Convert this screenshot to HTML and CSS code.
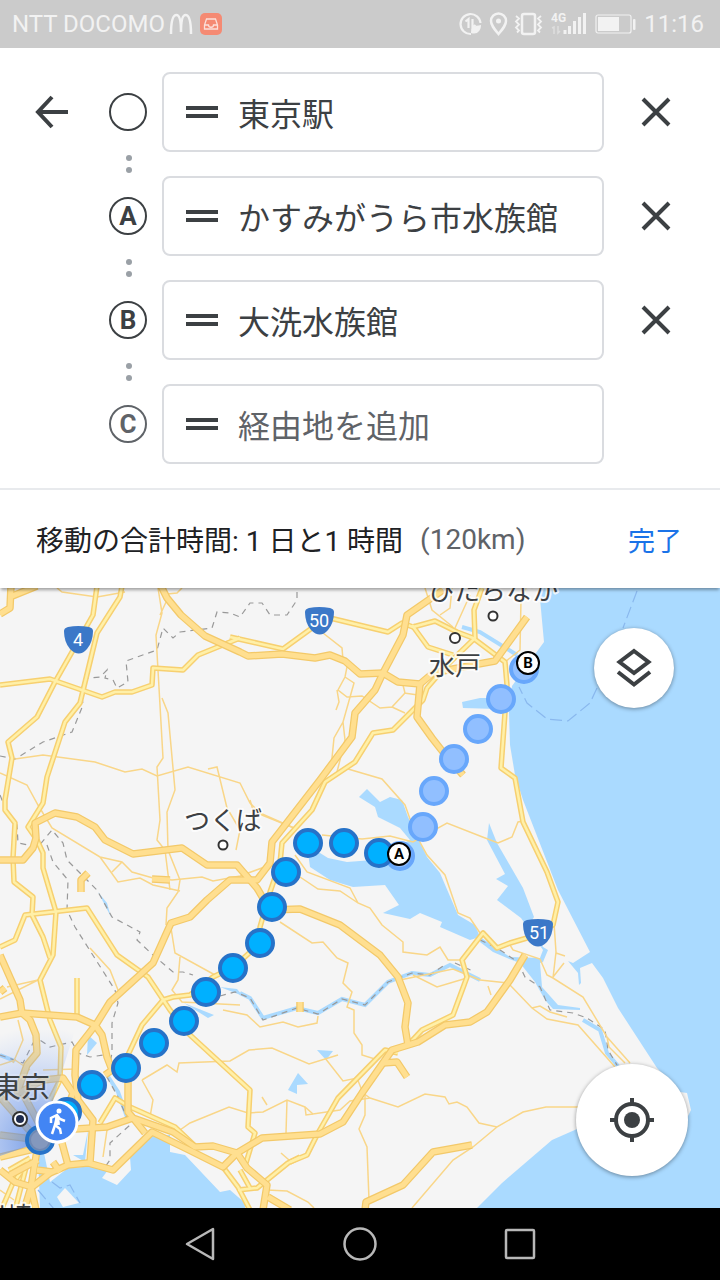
FILE: index.html
```html
<!DOCTYPE html>
<html lang="ja">

<head>
    <meta charset="UTF-8">
    <meta name="viewport" content="width=device-width, initial-scale=1.0">
    <title>経由地を追加</title>
    <link rel="stylesheet" href="styles.css">
</head>

<body>
    <div class="status-bar">
        <span class="carrier">NTT DOCOMO</span>
        <svg class="status-m" width="24" height="22" viewBox="0 0 24 22">
            <path d="M2 21C2 9 4 2 7.500 2S12 9 12 19C12 9 13 2 16.500 2S22 9 22 21" fill="none" stroke="#f2f2f2" stroke-width="2.500" />
        </svg>
        <svg class="status-mail" width="22" height="22" viewBox="0 0 22 22">
            <rect width="22" height="22" rx="5" fill="#f58a73" />
            <path d="M6.500 6h9l2 6v4h-13v-4zM4.500 12h4c0 3 5 3 5 0h4" fill="none" stroke="#fbe0da" stroke-width="1.300" />
        </svg>
        <div class="status-right">
            <svg width="84" height="26" viewBox="0 0 84 26" fill="none" stroke="#f2f2f2" stroke-width="2">
                <path d="M21.500 12A10 10 0 1 0 12 23M6.500 10.500l3-2.500v9M13.500 8v9l3-3" stroke-width="2.200" />
                <path d="M12 22c0-6 3-7 10-8 0 6-4 10-10 8z" fill="#f2f2f2" stroke="none" />
                <path d="M39.500 23c-5-6-7.500-9-7.500-13a7.500 7.500 0 0 1 15 0c0 4-2.500 7-7.500 13z" stroke-width="2.500" />
                <circle cx="39.500" cy="10" r="2.500" fill="#f2f2f2" stroke="none" />
                <rect x="63" y="3" width="13" height="20" rx="2" stroke-width="2.500" />
                <path d="M57 5l3 2.500-3 3 3 3-3 3 3 3-2 2M82 5l-3 2.500 3 3-3 3 3 3-3 3 2 2" stroke-width="1.800" />
            </svg>
            <svg width="36" height="26" viewBox="0 0 36 26">
                <text x="0" y="11" class="network-label">4G</text>
                <path d="M14 19v4M18.500 15v8M23.500 10v13M28.500 6v17M33.500 2v21" stroke="#f2f2f2" stroke-width="3" />
                <path d="M1 17l2-1v7M7 15v7l2-2" stroke="#dedede" stroke-width="1.500" fill="none" />
            </svg>
            <svg class="battery" width="41" height="20" viewBox="0 0 41 20">
                <rect x="1" y="1" width="35" height="18" rx="2" fill="none" stroke="#f2f2f2" stroke-width="1.200" />
                <rect x="3" y="3" width="21" height="14" fill="#f2f2f2" />
                <rect x="38" y="5" width="2.500" height="11" rx="1" fill="#f2f2f2" />
            </svg>
            <span class="clock">11:16</span>
        </div>
    </div>

    <form class="stops" onsubmit="return false">
        <div class="stop">
            <button class="icon-button" type="button" aria-label="戻る">
                <svg width="36" height="36" viewBox="0 0 36 36">
                    <path d="M34 18H5M18 3L4 18l14 15" />
                </svg>
            </button>
            <span class="marker"></span>
            <label class="field">
                <span class="handle"></span>
                <input type="text" value="東京駅" aria-label="出発地">
            </label>
            <button class="icon-button" type="button" aria-label="削除">
                <svg width="32" height="32" viewBox="0 0 32 32">
                    <path d="M3 3l26 26M29 3L3 29" />
                </svg>
            </button>
        </div>
        <div class="connector"><i></i><i></i></div>
        <div class="stop">
            <span></span>
            <span class="marker">A</span>
            <label class="field">
                <span class="handle"></span>
                <input type="text" value="かすみがうら市水族館" aria-label="経由地 A">
            </label>
            <button class="icon-button" type="button" aria-label="削除">
                <svg width="32" height="32" viewBox="0 0 32 32">
                    <path d="M3 3l26 26M29 3L3 29" />
                </svg>
            </button>
        </div>
        <div class="connector"><i></i><i></i></div>
        <div class="stop">
            <span></span>
            <span class="marker">B</span>
            <label class="field">
                <span class="handle"></span>
                <input type="text" value="大洗水族館" aria-label="経由地 B">
            </label>
            <button class="icon-button" type="button" aria-label="削除">
                <svg width="32" height="32" viewBox="0 0 32 32">
                    <path d="M3 3l26 26M29 3L3 29" />
                </svg>
            </button>
        </div>
        <div class="connector"><i></i><i></i></div>
        <div class="stop">
            <span></span>
            <span class="marker marker-empty">C</span>
            <label class="field">
                <span class="handle"></span>
                <input type="text" placeholder="経由地を追加" aria-label="経由地 C">
            </label>
        </div>
    </form>

    <div class="summary">
        <span class="total">移動の合計時間: 1 日と1 時間</span>
        <span class="distance">(120km)</span>
        <button class="done" type="button">完了</button>
    </div>

    <div class="map">
        <svg class="map-canvas" viewBox="0 588 720 620" preserveAspectRatio="xMidYMid slice">
            <defs>
                <radialGradient id="heading" gradientUnits="userSpaceOnUse" cx="40" cy="1142" r="115">
                    <stop offset="0" stop-color="#4a7de0" stop-opacity="0.75" />
                    <stop offset="0.5" stop-color="#6f9af0" stop-opacity="0.4" />
                    <stop offset="1" stop-color="#8fb2f5" stop-opacity="0" />
                </radialGradient>
                <g id="main-roads">
                    <path d="M97 586L93 615 55 682 37 717 8 742 12 758 5 800 5 810 15 823 13 858 14 882 33 897 32 915 43 937 50 958" />
                    <path d="M122 586L120 597 97 633 80 703 65 722 47 777 43 803 28 827 37 840 43 853V868L56 912 53 955 40 980 50 1020 61 1047 60 1080 50 1100" />
                    <path d="M0 685L50 679 102 697 115 692H132L152 685 153 668 183 670 198 655 240 638" />
                    <path d="M230 637L283 649 312 628 330 618 388 632 402 623 413 627 435 621 457 632 473 638 505 662 507 685 501 768 515 778 523 822 547 872 558 902 553 925 527 938 510 943 497 948 483 933 462 960 467 977 453 1015 422 1030 408 1045" />
                    <path d="M412 625L428 647 453 655M482 588L474 610 475 638 447 665 427 688 423 700 393 730 373 733 355 762 325 782 312 810 282 843 280 863 270 892 260 927V943L234 967 213 977 190 995 173 997 163 1000 142 1025 127 1057" />
                    <path d="M0 947L15 940 25 915 87 908 117 955 148 977 170 1010 190 1035 250 1090 248 1127 255 1133 246 1163" />
                    <path d="M77 978V1015M100 1123L115 1098 130 1107 175 1127 195 1146" />
                    <path d="M300 1157L288 1163 267 1180 257 1188 238 1190M223 1167L238 1187 250 1210M240 1170L250 1188" />
                    <path d="M290 1162L307 1155 318 1133 338 1098 385 1050 398 1053" />
                    <path d="M0 1213L12 1185 27 1163M15 1210L28 1160M9 1170L30 1158" />
                </g>
                <g id="highways">
                    <path d="M11 586L10 608 0 614M10 597L37 586" />
                    <path d="M161 586L167 598 181 615 205 636 240 652 248 656 282 654 315 658 330 655 345 661 360 674 383 673 398 682 420 684 433 673 473 665 495 661 527 617" />
                    <path d="M443 590L407 615 403 635 383 673 375 690 355 713 352 737 320 780 272 842 270 863 257 880H230L207 900 190 917 171 923 153 963 110 1002 97 1023 76 1050 75 1075 78 1100 93 1120 90 1163" />
                    <path d="M420 684L417 717 432 738 443 752 463 775" />
                    <path d="M0 860H23L33 848 36 838 35 823 55 813 77 817 95 827 105 840 133 854 182 848 207 865H237L257 888 270 910 300 909 340 925 380 955 398 977 408 1003 405 1027 408 1045" />
                    <path d="M525 955L510 980 487 1012 470 1022 445 1025 418 1042 392 1050 362 1093 343 1122 320 1134 262 1138 237 1153 223 1167 187 1149 152 1132 113 1170 88 1163 68 1165 50 1173 32 1187" />
                    <path d="M128 1073V1112L133 1118 173 1132 195 1147 213 1146 237 1153 247 1168 267 1185 263 1210M268 1197L290 1210" />
                    <path d="M60 1130L107 1127 133 1118 145 1133M0 1017L22 1013 77 1017 95 1025 102 1035 107 1057 112 1070 105 1075" />
                    <path d="M0 955L20 1000 22 1013 30 1020 36 1035 37 1053 27 1065 18 1090M43 1080L63 1078 73 1093 65 1115M15 1095L43 1080M0 1135L40 1140M0 1157L38 1148M37 1150L31 1187 36 1210M0 1170L15 1182 32 1187M10 1175L38 1160M62 1143L68 1165M53 1162L60 1172M22 1092L45 1135M0 1097L36 1138M37 1170L52 1172M24 1210L31 1187" />
                    <path d="M383 1063L397 1062 407 1077M472 1145L433 1152 403 1185 366 1202 365 1210" />
                    <path d="M88 873L81 880V892M152 879L170 880M0 992L5 988M300 1002V1012" />
                </g>
            </defs>

            <rect class="land" y="588" width="720" height="620" />

            <!-- sea, lakes and rivers -->
            <g class="water">
                <path d="M539 588L544 642 533 657 520 675 512 686 509 712 510 745 515 775 523 800 558 890 590 952 573 963 568 961 578 973 579 985 581 983 580 968 592 963 603 978 618 1008 657 1068 680 1092 687 1093 691 1110 685 1122 640 1125 577 1129 552 1140 502 1183 477 1208H720V588z" />
                <path d="M50 1182L68 1168 97 1166 108 1170 102 1178 117 1185 131 1170 130 1157 152 1136 170 1135V1152L185 1155 220 1192 230 1190 245 1203V1208H40L38 1155 44 1153z" />
                <path d="M359 797L367 789 380 802 390 797 402 800 408 817 427 857 440 873 458 915 475 925 480 937 470 940 440 927 442 922 420 913 410 919 383 913 399 905 385 885 353 887 330 880 310 867 308 853 320 853 328 858 347 862 373 860 390 850 410 840 400 828 378 817 375 807z" />
                <path d="M489 823L497 843 523 888 534 917 530 923 543 947 548 950 543 962 540 963 542 987 558 1005 580 1008V1010L553 1009 545 1000 535 982 520 963 507 958 493 952 480 942V937L510 957 540 958 543 950 521 918 497 900 508 886 496 879 505 874 487 840z" />
                <path d="M98 892L107 903 111 917zM298 1073L308 1084 297 1085V1094L288 1090zM317 1050L333 1051 326 1060zM462 702L480 698H497V709L463 708zM88 1035L97 1043 87 1055zM88 1130L85 1162 73 1155 83 1155zM220 987L237 989 243 996zM184 1003L214 1015 208 1018z" />
            </g>
            <path class="land" d="M57 1197L65 1188 79 1203 63 1207z" />
            <path class="river" d="M240 993L250 998 263 1018 297 1008 318 1013 342 999 365 1005 388 982 412 973 430 975 450 965 480 980M583 1020L600 1030 607 1053 618 1066M462 627L480 632 517 655M107 1075L118 1092 127 1117M0 1055L15 1061" />

            <!-- prefecture borders and ferry lines -->
            <g class="border">
                <path d="M297 592V600L287 615H270L262 603H250L240 617 230 613 217 612 212 628 180 632 173 638 163 628 157 650 126 661 128 682 117 688 113 680 105 678 107 670 100 677 88 678 81 688 83 705 72 732 43 742 15 759 0 756" />
                <path d="M0 795L4 805 17 825 18 843 38 847 52 830 63 843 67 860 97 890 112 917 140 932 137 940 153 955 173 972H183L193 975" />
                <path d="M47 845L53 862 68 880 67 910 75 927 115 990 118 1003 112 1023V1053L107 1077 118 1097 130 1125 110 1143V1160L105 1167M0 1055L23 1063 33 1043 40 1040 50 1047 72 1042 78 1053 90 1057 103 1055" />
                <path d="M220 996L235 992 250 998 263 1020 297 1008 318 1014 342 999 365 1005 388 982 412 973 430 975 443 966M455 963L475 972M480 940L497 948 518 962 525 977 540 987 550 1010 573 1013 587 1018 605 1030 608 1050 617 1065" />
            </g>
            <path class="ferry" d="M637 591L623 628M597 688L590 703 568 721 547 719 527 703 519 687M38 1190L54 1209M52 1182L60 1188 70 1185 80 1203" />

            <g class="minor-road">
                <path d="M57 588L62 592 97 597 125 592M158 588L162 613 156 635 163 758 157 767 160 820 157 840 165 850 170 890M167 600L160 615M182 588L177 593 167 594M162 698L168 713 175 790 167 812 168 850 180 880 178 892 167 908 166 925" />
                <path d="M15 759L43 755 95 762 125 772 142 769 157 776 188 767 240 783 250 803 262 815 294 828M208 769L217 767 227 808 240 830 236 850M0 773L27 785 38 805 52 828 100 857 122 862 132 872 153 878 172 880 202 877 213 881 240 876 270 865M100 857L118 882 140 878 153 885 180 891M122 862L112 872" />
                <path d="M171 928L175 953 215 975M180 957L178 980 172 990 182 1002 240 1005M90 948L110 970 118 990M0 999L38 980 7 987" />
                <path d="M323 633L342 648 343 660 347 667 345 677 338 690 347 697 362 696 380 708 392 707 405 693 403 685M345 677L354 683 343 722 345 740 337 772M337 690L339 702 336 710M343 722L334 738 331 768M392 707L405 713M404 693L418 695M348 769L382 779 405 805 415 833 427 855 445 875 458 913 470 918 480 933" />
                <path d="M425 588L432 610 453 627M452 588L450 608 440 615M470 595L455 628M526 588L521 600 520 650 505 662" />
                <path d="M250 800L253 810 294 828M322 835L362 839 390 836 413 842 447 823 480 836 498 843 512 837 518 822 523 821M295 855L307 872 350 888 358 903 370 908 382 925 403 942V952L427 955 440 947 448 960H462M300 877L318 889 340 891 358 903" />
                <path d="M280 922L312 943 323 942 337 958 348 963 343 983 352 992 347 1007 354 1010 354 1033 362 1045V1055L378 1060M413 975L437 987 467 978M400 980L453 969 480 980" />
                <path d="M510 945L513 950 540 959 547 975 553 978 583 997 607 1037 630 1063M554 923L556 952 553 978M556 953L565 956M564 963L553 977M480 980L508 983 532 1008 547 1019 578 1025 615 1067M532 1008L540 1006 550 1012 567 1017M607 1037L609 1047 625 1063M488 986L491 995" />
                <path d="M370 1098L398 1107 425 1094 445 1097 449 1104 457 1102 467 1107 479 1123 497 1127 523 1112 546 1107H580M497 1127L473 1147 453 1160 412 1208M365 1095V1115L359 1129 367 1147 369 1200" />
                <path d="M142 1080L167 1065 177 1072 179 1063 230 1061 249 1050 272 1048 309 1064 338 1055M325 1058L343 1081 357 1078 363 1093 370 1098M180 1130L190 1123 229 1107 248 1113 263 1112 287 1100 305 1107 313 1114 340 1110 350 1101 370 1098M287 1100L286 1133M262 1097L267 1105M142 1080L153 1100 150 1117" />
                <path d="M267 1190L287 1191 308 1202 314 1208M281 1153L289 1160M18 1020L23 1040 13 1063M43 1070L77 1069M107 1130L103 1157M223 1010L247 1015 260 1027 283 1022 298 1027 317 1023 318 1016M305 1107L306 1115 313 1114M0 1065L15 1060 30 1070M0 1190L14 1200" />
            </g>
            <use href="#main-roads" class="main-casing" />
            <use href="#main-roads" class="main-fill" />
            <use href="#highways" class="highway-casing" />
            <use href="#highways" class="highway-fill" />

            <!-- national route shields -->
            <g class="shield">
                <path d="M64 631Q64 628 68 627 78 625 89 627 93 628 93 631 93 642 87 649 79 658 70 649 64 642 64 631z" />
                <text x="78" y="646">4</text>
                <path d="M305 612Q305 609 309 608 319 606 330 608 334 609 334 612 334 623 328 630 320 639 311 630 305 623 305 612z" />
                <text x="319" y="627">50</text>
                <path d="M523 924Q523 921 527 920 538 918 549 920 553 921 553 924 553 935 547 942 538 951 529 942 523 935 523 924z" />
                <text x="539" y="939">51</text>
            </g>

            <path d="M40 1142L75 1030H0V1156z" fill="url(#heading)" />

            <g class="place">
                <text x="493" y="600">ひたちなか</text>
                <text x="455" y="675">水戸</text>
                <text x="223" y="830">つくば</text>
                <text class="capital" x="21" y="1098">東京</text>
                <text x="6" y="1226">川崎</text>
                <circle cx="493" cy="616" r="4.500" />
                <circle cx="455" cy="638" r="5" />
                <circle cx="223" cy="845" r="4.500" />
                <circle cx="20" cy="1119" r="7" stroke-width="3" />
                <circle class="capital-dot" cx="20" cy="1119" r="4" />
            </g>

            <!-- walking route -->
            <g class="route-next">
                <circle cx="524" cy="669" r="13" />
                <circle cx="501" cy="699" r="13" />
                <circle cx="478" cy="729" r="13" />
                <circle cx="454" cy="759" r="13" />
                <circle cx="434" cy="791" r="13" />
                <circle cx="423" cy="827" r="13" />
                <circle cx="400" cy="856" r="13" />
            </g>
            <g class="route">
                <circle cx="379" cy="853" r="13" />
                <circle cx="344" cy="843" r="13" />
                <circle cx="308" cy="843" r="13" />
                <circle cx="286" cy="872" r="13" />
                <circle cx="272" cy="907" r="13" />
                <circle cx="260" cy="943" r="13" />
                <circle cx="233" cy="968" r="13" />
                <circle cx="206" cy="992" r="13" />
                <circle cx="184" cy="1021" r="13" />
                <circle cx="154" cy="1043" r="13" />
                <circle cx="126" cy="1068" r="13" />
                <circle cx="92" cy="1085" r="13" />
                <circle cx="67" cy="1112" r="13" />
                <circle cx="40" cy="1140" r="13" />
            </g>
            <circle cx="40" cy="1140" r="10" fill="#8498bd" stroke="#7088b3" stroke-width="2" />
            <g class="waypoint">
                <circle cx="399" cy="854" r="11" />
                <text x="399" y="859">A</text>
                <circle cx="528" cy="663" r="11" />
                <text x="528" y="668">B</text>
            </g>
            <circle class="walker" cx="57" cy="1122" r="20" />
            <g fill="none" stroke="#fff" stroke-width="2.500">
                <circle cx="59" cy="1111" r="2.500" fill="#fff" stroke="none" />
                <path d="M57 1116L55 1125 60 1129 61 1134M55 1125L52 1134M51 1123V1118L57 1115 60 1119 65 1121" />
                <path d="M57 1116L58 1125" stroke-width="4" />
            </g>
        </svg>

        <button class="fab fab-layers" type="button" aria-label="レイヤ">
            <svg width="40" height="40" viewBox="0 0 40 40" fill="none" stroke="#3c4043" stroke-width="4">
                <path d="M20 3L34.500 14 20 25 5.500 14zM4 24l16 12.500L36 24" />
            </svg>
        </button>
        <button class="fab fab-locate" type="button" aria-label="現在地">
            <svg width="44" height="44" viewBox="0 0 44 44" fill="none" stroke="#3c4043" stroke-width="4">
                <circle cx="22" cy="22" r="16" />
                <circle cx="22" cy="22" r="8" fill="#3c4043" stroke="none" />
                <path d="M22 0v6M22 38v6M0 22h6M38 22h6" />
            </svg>
        </button>
    </div>

    <nav class="nav-bar">
        <button type="button" aria-label="戻る">
            <svg width="36" height="36" viewBox="0 0 36 36">
                <path d="M31 3v30L5 18z" />
            </svg>
        </button>
        <button type="button" aria-label="ホーム">
            <svg width="36" height="36" viewBox="0 0 36 36">
                <circle cx="18" cy="18" r="15.500" />
            </svg>
        </button>
        <button type="button" aria-label="最近">
            <svg width="36" height="36" viewBox="0 0 36 36">
                <rect x="4" y="4" width="28" height="28" rx="1" />
            </svg>
        </button>
    </nav>
</body>

</html>
```
FILE: styles.css
```css
* {
    box-sizing: border-box;
}

body {
    display: flex;
    flex-direction: column;
    min-height: 100vh;
    margin: 0;
    background-color: #fff;
    color: #3c4043;
    font-family: Roboto, "Noto Sans CJK JP", sans-serif;
}

button {
    padding: 0;
    border: none;
    background: none;
    cursor: pointer;
    font-family: inherit;
}

svg {
    display: block;
}

/* Status bar */
.status-bar {
    display: flex;
    align-items: center;
    height: 48px;
    padding: 0 16px 0 12px;
    background-color: #cbcbcb;
    color: #f2f2f2;
}

.carrier {
    font-size: 24px;
}

.status-m {
    margin-left: 4px;
}

.status-mail {
    margin-left: 7px;
}

.status-right {
    display: flex;
    align-items: center;
    gap: 8px;
    margin-left: auto;
}

.network-label {
    fill: #f2f2f2;
    font-size: 12px;
    font-weight: 700;
}

.clock {
    font-size: 24px;
}

/* Stops */
.stops {
    padding: 24px 12px 24px 0;
    border-bottom: 2px solid #e8eaed;
}

.stop {
    display: grid;
    grid-template-columns: 104px 48px minmax(0, 1fr) 104px;
    align-items: center;
    justify-items: center;
}

.marker {
    display: flex;
    align-items: center;
    justify-content: center;
    width: 38px;
    height: 38px;
    border: 2px solid #3c4043;
    border-radius: 50%;
    font-size: 26px;
    font-weight: 700;
}

.marker-empty {
    border-color: #5f6368;
    color: #5f6368;
}

.field {
    display: flex;
    align-items: center;
    gap: 20px;
    justify-self: stretch;
    height: 80px;
    margin-left: 10px;
    padding: 0 22px;
    border: 2px solid #dadce0;
    border-radius: 8px;
}

.handle {
    flex: none;
    width: 32px;
    height: 12px;
    border-top: 4px solid #3c4043;
    border-bottom: 4px solid #3c4043;
}

.field input {
    flex: 1;
    min-width: 0;
    height: 48px;
    padding: 0;
    border: none;
    outline: none;
    background: none;
    color: #3c4043;
    font-family: "Noto Sans CJK JP", sans-serif;
    font-size: 32px;
    line-height: 48px;
}

.field input::placeholder {
    color: #5f6368;
}

.icon-button path {
    fill: none;
    stroke: #3c4043;
    stroke-width: 4;
}

.connector {
    display: flex;
    flex-direction: column;
    align-items: center;
    justify-content: center;
    gap: 6px;
    width: 48px;
    height: 24px;
    margin-left: 105px;
}

.connector i {
    width: 6px;
    height: 6px;
    border-radius: 50%;
    background-color: #9aa0a6;
}

/* Summary */
.summary {
    position: relative;
    z-index: 1;
    display: flex;
    align-items: center;
    height: 98px;
    padding: 0 38px 0 36px;
    background-color: #fff;
    box-shadow: 0 3px 3px -1px rgba(0, 0, 0, 0.35);
    font-size: 28px;
}

.total {
    color: #202124;
}

.distance {
    margin-left: 17px;
    color: #5f6368;
}

.done {
    margin-left: auto;
    color: #1a73e8;
    font-size: 27px;
}

/* Map */
.map {
    position: relative;
    flex: 1;
    min-height: 400px;
    overflow: hidden;
}

.map-canvas {
    position: absolute;
    inset: 0;
    width: 100%;
    height: 100%;
}

.land {
    fill: #f5f5f5;
}

.water {
    fill: #aadaff;
}

.river {
    fill: none;
    stroke: #aadaff;
    stroke-width: 4;
}

.border {
    fill: none;
    stroke: #999;
    stroke-width: 1.2;
    stroke-dasharray: 6 5;
}

.ferry {
    fill: none;
    stroke: #8ab8ee;
    stroke-width: 1.2;
    stroke-dasharray: 12 5;
}

.minor-road {
    fill: none;
    stroke: #f9d688;
    stroke-width: 1.5;
}

.main-casing,
.main-fill,
.highway-casing,
.highway-fill {
    fill: none;
    stroke-linejoin: round;
}

.main-casing {
    stroke: #f7d070;
    stroke-width: 5.5;
}

.main-fill {
    stroke: #fff0a8;
    stroke-width: 2.5;
}

.highway-casing {
    stroke: #f3c969;
    stroke-width: 7.5;
}

.highway-fill {
    stroke: #ffdf90;
    stroke-width: 5;
}

.shield path {
    fill: #3b78c8;
}

.shield text {
    fill: #fff;
    font-size: 18px;
    text-anchor: middle;
}

.place text {
    fill: #3c4043;
    stroke: #fff;
    stroke-width: 4;
    stroke-linejoin: round;
    stroke-opacity: 0.8;
    paint-order: stroke;
    font-size: 26px;
    text-anchor: middle;
}

.place .capital {
    stroke-opacity: 0.2;
    font-size: 29px;
}

.place circle {
    fill: #fff;
    stroke: #333;
    stroke-width: 2;
}

.place .capital-dot {
    fill: #1d2a4d;
    stroke: none;
}

.route circle {
    fill: #00b0ff;
    stroke: #2672c8;
    stroke-width: 4;
}

.route-next circle {
    fill: #91bfff;
    stroke: #68a7fb;
    stroke-width: 4;
}

.waypoint circle {
    fill: #fff;
    stroke: #000;
    stroke-width: 2;
}

.waypoint text {
    fill: #000;
    font-size: 15px;
    font-weight: 700;
    text-anchor: middle;
}

.walker {
    fill: #4285f4;
    stroke: #fff;
    stroke-width: 3;
}

.fab {
    position: absolute;
    display: flex;
    align-items: center;
    justify-content: center;
    border-radius: 50%;
    background-color: #fff;
    box-shadow: 0 1px 4px rgba(0, 0, 0, 0.4);
}

.fab-layers {
    top: 40px;
    right: 46px;
    width: 80px;
    height: 80px;
}

.fab-locate {
    right: 32px;
    bottom: 32px;
    width: 112px;
    height: 112px;
}

/* Navigation bar */
.nav-bar {
    display: flex;
    align-items: center;
    justify-content: center;
    gap: 124px;
    height: 72px;
    background-color: #000;
}

.nav-bar svg {
    fill: none;
    stroke: #b8b8b8;
    stroke-width: 2.5;
    stroke-linejoin: round;
}
```
